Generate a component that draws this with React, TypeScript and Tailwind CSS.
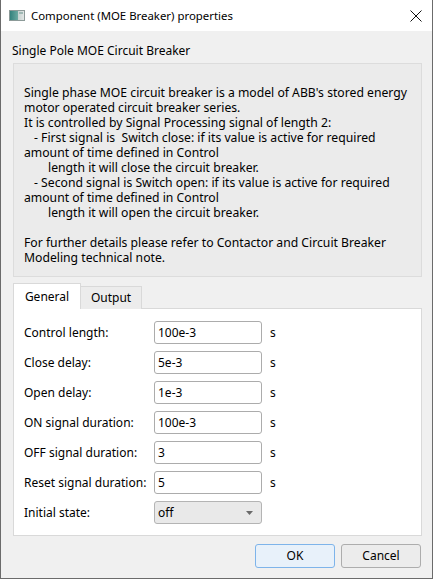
import React from "react";

const font = { fontFamily: '"Noto Sans", "Open Sans", sans-serif' };

function Field({ label, value }: { label: string; value: string }) {
  return (
    <div className="flex items-center h-[23px]">
      <div className="w-[130px] shrink-0 text-[12px] leading-[16px] text-black">{label}</div>
      <div className="w-[108px] h-[23px] shrink-0 border border-[#acacac] rounded-[3px] bg-white flex items-center pl-[3px] text-[12px] leading-[16px] text-black">
        {value}
      </div>
      <div className="ml-[8px] text-[12px] leading-[16px] text-black">s</div>
    </div>
  );
}

export default function App() {
  const lines: { t: string; indent?: number }[] = [
    { t: "Single phase MOE circuit breaker is a model of ABB's stored energy" },
    { t: "motor operated circuit breaker series." },
    { t: "It is controlled by Signal Processing signal of length 2:" },
    { t: "- First signal is  Switch close: if its value is active for required", indent: 10 },
    { t: "amount of time defined in Control" },
    { t: "length it will close the circuit breaker.", indent: 24 },
    { t: "- Second signal is Switch open: if its value is active for required", indent: 10 },
    { t: "amount of time defined in Control" },
    { t: "length it will open the circuit breaker.", indent: 24 },
    { t: "\u00a0" },
    { t: "For further details please refer to Contactor and Circuit Breaker" },
    { t: "Modeling technical note." },
  ];

  return (
    <div style={font} className="w-[433px] h-[579px] flex flex-col border-x border-b border-[#6b6b6b] bg-[#f0f0f0] text-black">
      {/* title bar */}
      <div className="h-[31px] shrink-0 bg-white flex items-center">
        <div className="ml-[8px] w-[16px] h-[12px] flex items-center">
          <svg width="16" height="11" viewBox="0 0 16 11">
            <defs>
              <linearGradient id="ig" x1="0" y1="0" x2="1" y2="0">
                <stop offset="0" stopColor="#2f7f7a" />
                <stop offset="0.55" stopColor="#6aa8a0" />
                <stop offset="0.6" stopColor="#c9d3d1" />
                <stop offset="1" stopColor="#e3e8e7" />
              </linearGradient>
            </defs>
            <rect x="0.5" y="0.5" width="15" height="10" fill="url(#ig)" stroke="#8c9a98" />
            <rect x="10" y="2" width="4" height="2" fill="#9fb8b4" />
          </svg>
        </div>
        <div className="ml-[6px] text-[11.4px] leading-[16px]">Component (MOE Breaker) properties</div>
        <div className="ml-auto mr-[10px] w-[12px] h-[12px]">
          <svg width="12" height="12" viewBox="0 0 12 12">
            <path d="M0.5 0.5 L11.5 11.5 M11.5 0.5 L0.5 11.5" stroke="#111" strokeWidth="1" fill="none" />
          </svg>
        </div>
      </div>

      {/* body */}
      <div className="flex-1 flex flex-col pl-[12px] pr-[10px] pt-[12px]">
        <div className="text-[12px] leading-[16px] -ml-[1px]">Single Pole MOE Circuit Breaker</div>
        <div className="mt-[4px] border border-[#dcdcdc] bg-[#ebebeb] pl-[10px] pt-[21px] pb-[11px] text-[12.2px] leading-[15px]">
          {lines.map((l, i) => (
            <div key={i} className="whitespace-pre" style={l.indent ? { paddingLeft: l.indent } : undefined}>
              {l.t}
            </div>
          ))}
        </div>

        {/* tabs */}
        <div className="mt-[6px] flex items-end h-[26px] relative z-10">
          <div className="h-[26px] w-[68px] bg-white border border-b-0 border-[#d9d9d9] flex items-center justify-center text-[12px] leading-[16px]">
            General
          </div>
          <div className="h-[23px] w-[62px] -ml-[1px] bg-[#ececec] border border-b-0 border-[#d9d9d9] flex items-center justify-center text-[12px] leading-[16px]">
            Output
          </div>
        </div>
        <div className="-mt-[1px] border border-[#d9d9d9] bg-white pl-[10px] pt-[12px] pb-[11px] flex flex-col gap-[7px]">
          <Field label="Control length:" value="100e-3" />
          <Field label="Close delay:" value="5e-3" />
          <Field label="Open delay:" value="1e-3" />
          <Field label="ON signal duration:" value="100e-3" />
          <Field label="OFF signal duration:" value="3" />
          <Field label="Reset signal duration:" value="5" />
          <div className="flex items-center h-[23px]">
            <div className="w-[130px] shrink-0 text-[12px] leading-[16px]">Initial state:</div>
            <div className="w-[108px] h-[23px] shrink-0 border border-[#b4b4b4] rounded-[3px] bg-[#e9e9e9] flex items-center pl-[3px] pr-[8px] text-[12px] leading-[16px]">
              <span>off</span>
              <svg className="ml-auto" width="7" height="4" viewBox="0 0 7 4">
                <path d="M0 0 L7 0 L3.5 4 Z" fill="#6a6a6a" />
              </svg>
            </div>
          </div>
        </div>

        {/* buttons */}
        <div className="mt-[8px] flex justify-end gap-[6px] pr-[1px]">
          <div className="w-[80px] h-[24px] border border-[#7eb4ea] rounded-[3px] bg-[#e8f1fa] flex items-center justify-center text-[12px] leading-[16px]">
            OK
          </div>
          <div className="w-[80px] h-[24px] border border-[#adadad] rounded-[3px] bg-[#ececec] flex items-center justify-center text-[12px] leading-[16px]">
            Cancel
          </div>
        </div>
      </div>
    </div>
  );
}
